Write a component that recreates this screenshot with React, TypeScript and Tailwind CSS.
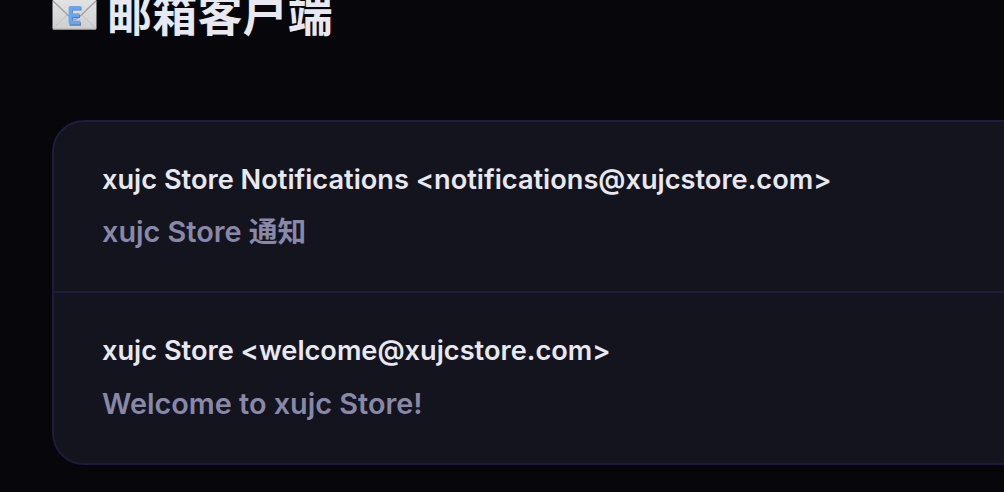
const messages = [
  { sender: "xujc Store Notifications <notifications@xujcstore.com>", subject: "xujc Store 通知" },
  { sender: "xujc Store <welcome@xujcstore.com>", subject: "Welcome to xujc Store!" },
];

function MailIcon() {
  return (
    <svg width="45" height="30" viewBox="0 0 45 30" className="shrink-0">
      <defs>
        <linearGradient id="paper" x1="0" y1="0" x2="0" y2="1">
          <stop offset="0" stopColor="#e2e2e2" />
          <stop offset="1" stopColor="#cfcfcf" />
        </linearGradient>
      </defs>
      <rect x="0.500" width="44" height="29.500" rx="1" fill="url(#paper)" />
      <path d="M1 28.500L16 14M44 28.500L29 14" stroke="#c0c0c0" fill="none" />
      <path d="M1 1L19 18Q22.500 21 26 18L44 1" stroke="#a0a0a0" strokeWidth="1.300" fill="none" />
      <path d="M1 29H44" stroke="#b0b0b0" />
      {/* blue E badge with its drop shadow */}
      <path d="M29.500 8.800H19.300V24H29M19.300 16.200H28" stroke="#6f7680" strokeWidth="3.400" fill="none" />
      <path d="M28.800 7.800H18.500V22.500H28.300M18.500 15.200H27.300" stroke="#64a5f5" strokeWidth="3.800" strokeLinejoin="round" fill="none" />
    </svg>
  );
}

export default function App() {
  return (
    <main className="h-[492px] w-full overflow-hidden bg-[#06060b] pl-[52px] font-['Inter','Noto_Sans_CJK_SC',sans-serif]">
      <header className="flex h-[120px] items-start">
        <MailIcon />
        <h1 className="-mt-[16px] ml-[10px] text-[45px] leading-[64px] font-semibold tracking-[0.2px] text-[#e8e8f0]">邮箱客户端</h1>
      </header>

      <section className="h-[345px] w-[1100px] rounded-[32px] border-2 border-[#201a3c] bg-[#14141f]">
        {messages.map((message) => (
          <article
            key={message.sender}
            className="h-[171.3px] border-b-2 border-[#201a3c] pt-[37px] pl-12 whitespace-nowrap last:border-b-0"
          >
            <h2 className="text-[27.2px] leading-[42px] font-semibold text-[#e8e8f0]">{message.sender}</h2>
            <p className="mt-[10.3px] text-[28.8px] leading-[42px] font-semibold text-[#8888a8]">{message.subject}</p>
          </article>
        ))}
      </section>
    </main>
  );
}
